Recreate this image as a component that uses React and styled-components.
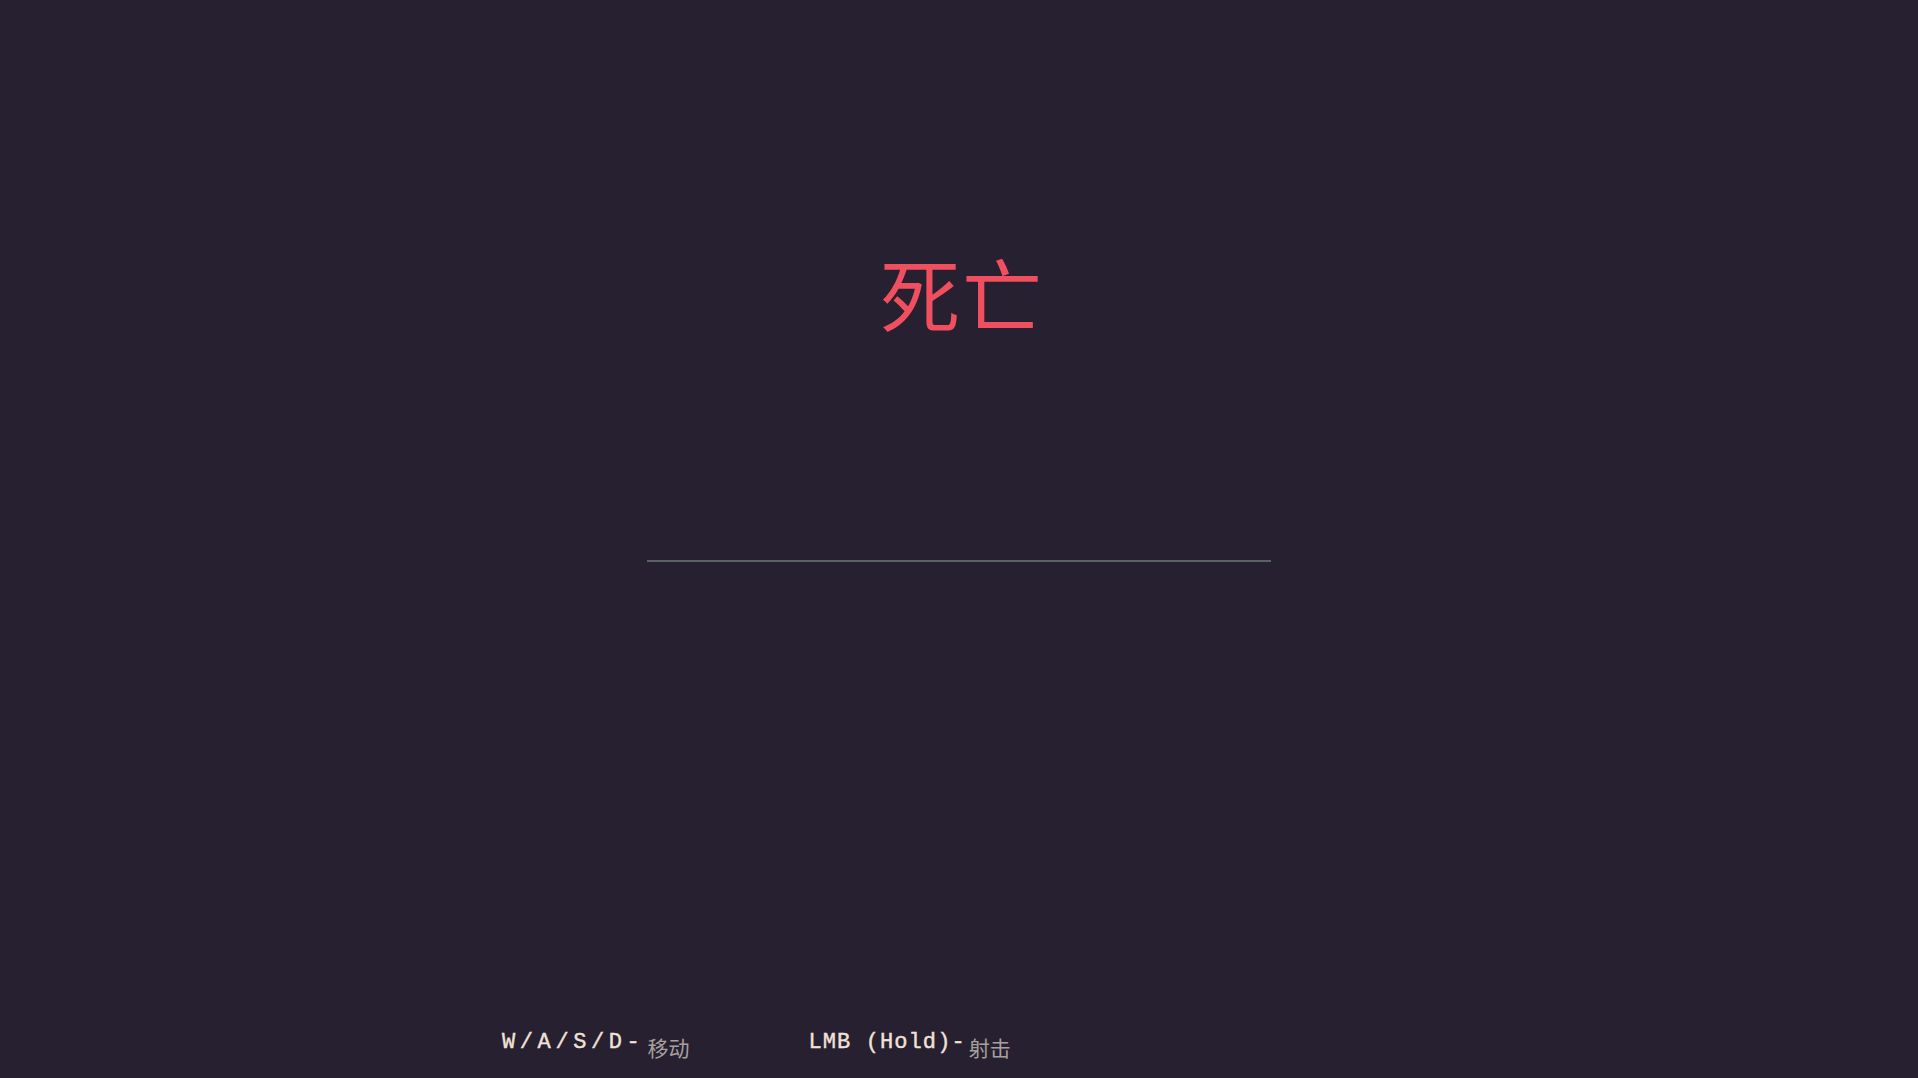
import React from "react"
import styled, { createGlobalStyle } from "styled-components";

const Global = createGlobalStyle`
  html, body {
    margin: 0;
    padding: 0;
    background: #262030;
  }
`;

const Screen = styled.main`
  display: flex;
  flex-direction: column;
  align-items: center;
  height: 1078px;
  width: 100%;
  background: #262030;
  overflow: hidden;
`;

const Title = styled.h1`
  margin: 251px 0 0;
  padding-left: 6px;
  font-family: "Noto Sans CJK SC", "Noto Sans", sans-serif;
  font-weight: 400;
  font-size: 80px;
  line-height: 1;
  letter-spacing: 2px;
  color: #ef4f5f;
`;

const Divider = styled.hr`
  margin: 229px 0 0;
  width: 624px;
  height: 2px;
  border: none;
  background: #5b6262;
`;

const Controls = styled.footer`
  margin-top: auto;
  align-self: stretch;
  display: flex;
  gap: 119px;
  padding: 0 0 23px 502px;
`;

const Control = styled.div`
  display: flex;
  align-items: baseline;
`;

const Key = styled.span`
  font-family: "Liberation Mono", "DejaVu Sans Mono", monospace;
  font-size: 22px;
  font-weight: 400;
  letter-spacing: ${p => p.$spacing}px;
  color: #f1e2d8;
  -webkit-text-stroke: 0.4px #f1e2d8;
`;

const Action = styled.span`
  position: relative;
  top: 8px;
  margin-left: 3px;
  font-family: "Noto Sans CJK SC", sans-serif;
  font-size: 21px;
  color: #a8a0a0;
`;

const controls = [
  { key: "W/A/S/D-", spacing: 4.6, action: "移动" },
  { key: "LMB (Hold)-", spacing: 1.1, action: "射击" },
];

export default function App() {
  return (
    <>
      <Global />
      <Screen>
        <Title>死亡</Title>
        <Divider />
        <Controls>
          {controls.map(c => (
            <Control key={c.key}>
              <Key $spacing={c.spacing}>{c.key}</Key>
              <Action>{c.action}</Action>
            </Control>
          ))}
        </Controls>
      </Screen>
    </>
  );
}
